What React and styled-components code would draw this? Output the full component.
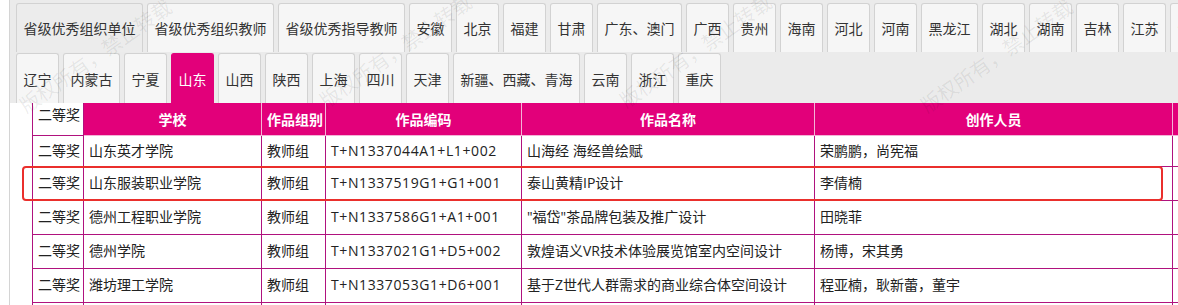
import React from 'react'
import styled, { createGlobalStyle } from 'styled-components'

const GlobalStyle = createGlobalStyle`
  html, body {
    margin: 0;
    padding: 0;
    background: #fff;
  }
  body {
    font-family: 'Open Sans', 'Noto Sans CJK SC', sans-serif;
    font-size: 14px;
    color: #222;
  }
`

const Frame = styled.div`
  position: relative;
  margin-left: 9px;
  border-left: 1px solid #d4d4d4;
  height: 305px;
  overflow: hidden;
`

const TabBar = styled.div`
  background: #ebebeb;
  padding: 3px 0 0 6px;
  display: flex;
  flex-direction: column;
  gap: 1px;
`

const TabRow = styled.div`
  display: flex;
  gap: 4px;
  white-space: nowrap;
`

const Tab = styled.div`
  flex: none;
  display: flex;
  align-items: center;
  height: ${p => p.h || 49}px;
  padding: 0 6.5px;
  border: 1px solid ${p => (p.active ? '#e2007a' : '#d2d2d2')};
  border-bottom: none;
  border-radius: 3px 3px 0 0;
  background: ${p => (p.active ? '#e2007a' : p.dim ? '#ececec' : '#f6f6f6')};
  color: ${p => (p.active ? '#fff' : '#333')};
  font-family: 'Noto Sans CJK SC', sans-serif;
  font-size: 14px;
  box-sizing: border-box;
`

const TableWrap = styled.div`
  margin-left: 22px;
`

const Table = styled.table`
  border-collapse: collapse;
  table-layout: fixed;
  width: 1250px;
  line-height: 20px;
`

const HeadCell = styled.th`
  box-sizing: border-box;
  height: 32px;
  padding: 0 5px;
  background: ${p => (p.plain ? '#fff' : '#e2007a')};
  color: ${p => (p.plain ? '#222' : '#fff')};
  font-weight: ${p => (p.plain ? 400 : 700)};
  text-align: ${p => (p.plain ? 'left' : 'center')};
  vertical-align: ${p => (p.plain ? 'top' : 'middle')};
  padding-top: ${p => (p.plain ? '1px' : '0')};
  border: 1px solid ${p => (p.plain ? '#b0127e' : '#f3b3d6')};
  border-left-color: #b0127e;
  border-top: none;
  font-family: 'Noto Sans CJK SC', sans-serif;
  font-size: 14px;
  white-space: nowrap;
  overflow: hidden;
`

const Cell = styled.td`
  box-sizing: border-box;
  height: ${p => p.h || 34}px;
  padding: 0 5px;
  border: 1px solid #b0127e;
  white-space: nowrap;
  overflow: hidden;
  letter-spacing: ${p => (p.code ? '0.6px' : '0')};
  font-family: ${p => (p.code ? "'Open Sans', sans-serif" : "'Open Sans', 'Noto Sans CJK SC', sans-serif")};
`

const Highlight = styled.div`
  position: absolute;
  left: 12px;
  top: 166px;
  width: 1141px;
  height: 35px;
  border: 2px solid #ea2f2c;
  border-radius: 4px;
  box-sizing: border-box;
  pointer-events: none;
`

const Watermark = styled.span`
  position: absolute;
  left: ${p => p.x - 95}px;
  top: ${p => p.y - 14}px;
  width: 190px;
  text-align: center;
  transform: rotate(-35deg);
  font-family: 'Noto Sans CJK SC', sans-serif;
  font-size: 20px;
  color: rgba(0, 0, 0, 0.08);
  white-space: nowrap;
  pointer-events: none;
`

const rowOne = [
  '省级优秀组织单位', '省级优秀组织教师', '省级优秀指导教师', '安徽', '北京', '福建', '甘肃',
  '广东、澳门', '广西', '贵州', '海南', '河北', '河南', '黑龙江', '湖北', '湖南', '吉林', '江苏', '江西',
]

const rowTwo = [
  '辽宁', '内蒙古', '宁夏', '山东', '山西', '陕西', '上海', '四川', '天津',
  '新疆、西藏、青海', '云南', '浙江', '重庆',
]

const widths = [51, 178, 64, 196, 293, 358, 110]

const rows = [
  ['二等奖', '山东英才学院', '教师组', 'T+N1337044A1+L1+002', '山海经 海经兽绘赋', '荣鹏鹏，尚宪福'],
  ['二等奖', '山东服装职业学院', '教师组', 'T+N1337519G1+G1+001', '泰山黄精IP设计', '李倩楠'],
  ['二等奖', '德州工程职业学院', '教师组', 'T+N1337586G1+A1+001', '"福岱"茶品牌包装及推广设计', '田晓菲'],
  ['二等奖', '德州学院', '教师组', 'T+N1337021G1+D5+002', '敦煌语义VR技术体验展览馆室内空间设计', '杨博，宋其勇'],
  ['二等奖', '潍坊理工学院', '教师组', 'T+N1337053G1+D6+001', '基于Z世代人群需求的商业综合体空间设计', '程亚楠，耿新蕾，董宇'],
  ['二等奖', '', '', '', '', ''],
]

const marks = [
  { x: 85, y: 55 },
  { x: 385, y: 50 },
  { x: 685, y: 50 },
  { x: 986, y: 55 },
]

const App = () => {
  return (
    <>
      <GlobalStyle />
      <Frame>
        <TabBar>
          <TabRow>
            {rowOne.map((t, i) => (
              <Tab key={t} dim={i === 0}>{t}</Tab>
            ))}
          </TabRow>
          <TabRow>
            {rowTwo.map(t => (
              <Tab key={t} h={50} active={t === '山东'}>{t}</Tab>
            ))}
          </TabRow>
        </TabBar>
        <TableWrap>
          <Table>
            <colgroup>
              {widths.map((w, i) => <col key={i} style={{ width: w }} />)}
            </colgroup>
            <thead>
              <tr>
                <HeadCell plain>二等奖</HeadCell>
                <HeadCell>学校</HeadCell>
                <HeadCell>作品组别</HeadCell>
                <HeadCell>作品编码</HeadCell>
                <HeadCell>作品名称</HeadCell>
                <HeadCell>创作人员</HeadCell>
                <HeadCell />
              </tr>
            </thead>
            <tbody>
              {rows.map((r, i) => (
                <tr key={i}>
                  {r.map((c, j) => (
                    <Cell key={j} code={j === 3} h={i === 0 ? 31 : 34}>{c}</Cell>
                  ))}
                  <Cell h={i === 0 ? 31 : 34} />
                </tr>
              ))}
            </tbody>
          </Table>
        </TableWrap>
        <Highlight />
        {marks.map((m, i) => (
          <Watermark key={i} x={m.x} y={m.y}>版权所有，禁止转载</Watermark>
        ))}
      </Frame>
    </>
  )
}

export default App
